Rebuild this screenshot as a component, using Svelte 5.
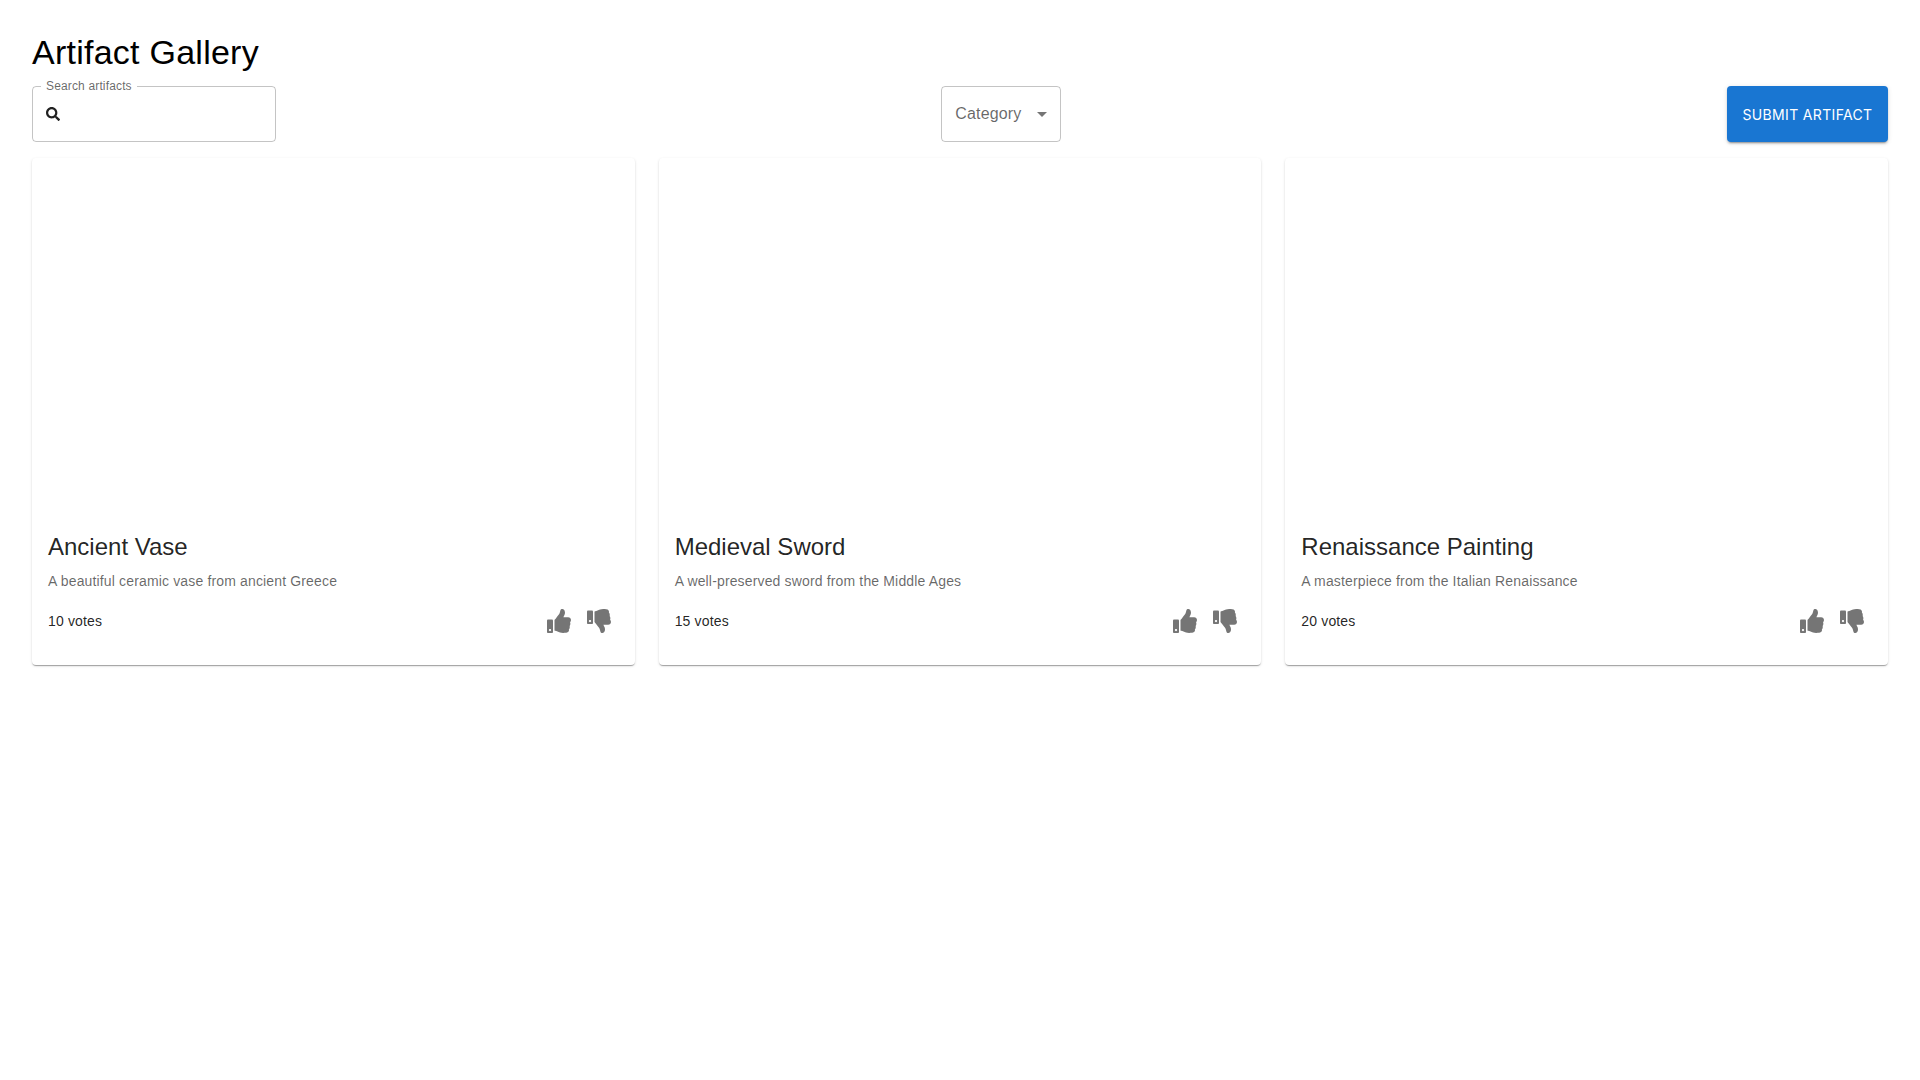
<script lang="ts">
  const artifacts = [
    { title: 'Ancient Vase', text: 'A beautiful ceramic vase from ancient Greece', votes: 10 },
    { title: 'Medieval Sword', text: 'A well-preserved sword from the Middle Ages', votes: 15 },
    { title: 'Renaissance Painting', text: 'A masterpiece from the Italian Renaissance', votes: 20 },
  ];
</script>

<div class="page">
  <h1>Artifact Gallery</h1>

  <div class="toolbar">
    <fieldset class="search">
      <legend>Search artifacts</legend>
      <svg class="search-icon" viewBox="0 0 512 512" fill="currentColor">
        <path d="M505 442.7L405.3 343c-4.5-4.5-10.6-7-17-7H372c27.6-35.3 44-79.7 44-128C416 93.1 322.9 0 208 0S0 93.1 0 208s93.1 208 208 208c48.3 0 92.7-16.4 128-44v16.3c0 6.4 2.5 12.5 7 17l99.7 99.7c9.4 9.4 24.6 9.4 33.9 0l28.3-28.3c9.4-9.4 9.4-24.6.1-34zM208 336c-70.7 0-128-57.2-128-128 0-70.7 57.2-128 128-128 70.7 0 128 57.2 128 128 0 70.7-57.2 128-128 128z" />
      </svg>
    </fieldset>

    <div class="select">
      <span>Category</span>
      <svg class="caret" viewBox="0 0 24 24" fill="currentColor"><path d="M7 10l5 5 5-5z" /></svg>
    </div>

    <button class="submit">Submit Artifact</button>
  </div>

  <div class="grid">
    {#each artifacts as a}
      <div class="card">
        <div class="media"></div>
        <div class="content">
          <h5>{a.title}</h5>
          <p class="desc">{a.text}</p>
          <div class="footer">
            <span class="votes">{a.votes} votes</span>
            <div class="actions">
              <button class="icon-btn" aria-label="Vote up">
                <svg viewBox="0 0 512 512" fill="currentColor">
                  <path d="M104 224H24c-13.255 0-24 10.745-24 24v240c0 13.255 10.745 24 24 24h80c13.255 0 24-10.745 24-24V248c0-13.255-10.745-24-24-24zM64 472c-13.255 0-24-10.745-24-24s10.745-24 24-24 24 10.745 24 24-10.745 24-24 24zM384 81.452c0 42.416-25.97 66.208-33.277 94.548h101.723c33.397 0 59.397 27.746 59.553 58.098.084 17.938-7.546 37.249-19.439 49.197l-.11.11c9.836 23.337 8.237 56.037-9.308 79.469 8.681 25.895-.069 57.704-16.382 74.757 4.298 17.598 2.244 32.575-6.148 44.632C440.202 511.587 389.616 512 346.839 512l-2.845-.001c-48.287-.017-87.806-17.598-119.56-31.725-15.957-7.099-36.821-15.887-52.651-16.178-6.54-.12-11.783-5.457-11.783-11.998v-213.77c0-3.2 1.282-6.271 3.558-8.521 39.614-39.144 56.648-80.587 89.117-113.111 14.804-14.832 20.188-37.236 25.393-58.902C282.515 39.293 291.817 0 312 0c24 0 72 8 72 81.452z" />
                </svg>
              </button>
              <button class="icon-btn" aria-label="Vote down">
                <svg viewBox="0 0 512 512" fill="currentColor">
                  <path d="M0 56v240c0 13.255 10.745 24 24 24h80c13.255 0 24-10.745 24-24V56c0-13.255-10.745-24-24-24H24C10.745 32 0 42.745 0 56zm40 200c0-13.255 10.745-24 24-24s24 10.745 24 24-10.745 24-24 24-24-10.745-24-24zm272 256c-20.183 0-29.485-39.293-33.931-57.795-5.206-21.666-10.589-44.07-25.393-58.902-32.469-32.524-49.503-73.967-89.117-113.111a11.98 11.98 0 0 1-3.558-8.521V59.901c0-6.541 5.243-11.878 11.783-11.998 15.83-.29 36.694-9.079 52.651-16.178C256.189 17.598 295.709.017 343.995 0h2.844c42.777 0 93.363.413 113.774 29.737 8.392 12.057 10.446 27.034 6.148 44.632 16.312 17.053 25.063 48.863 16.382 74.757 17.544 23.432 19.143 56.132 9.308 79.469l.11.11c11.893 11.949 19.523 31.259 19.439 49.197-.156 30.352-26.157 58.098-59.553 58.098H350.723C358.03 364.34 384 388.132 384 430.548 384 504 336 512 312 512z" />
                </svg>
              </button>
            </div>
          </div>
        </div>
      </div>
    {/each}
  </div>
</div>

<style>
  :global(body) { margin: 0; background: #fff; font-family: "Liberation Sans", Arial, sans-serif; }
  .page { padding: 32px; }
  h1 { margin: 0 0 14px; font-size: 34px; font-weight: 400; line-height: 40px; letter-spacing: 0.25px; color: #000; }

  .toolbar { display: flex; justify-content: space-between; align-items: flex-end; margin-bottom: 16px; }

  .search {
    box-sizing: border-box; width: 243.6px; height: 62px; margin: -6px 0 0; padding: 0 13px;
    border: 1px solid rgba(0, 0, 0, 0.23); border-radius: 4px;
    display: flex; align-items: center;
  }
  .search legend { margin-left: -5px; padding: 0 5px; font-size: 12px; line-height: 12px; letter-spacing: 0.15px; color: rgba(0, 0, 0, 0.6); }
  .search-icon { width: 14px; height: 14px; margin-bottom: 5px; color: rgba(0, 0, 0, 0.87); }

  .select {
    box-sizing: border-box; width: 120px; height: 56px; padding: 0 13px;
    border: 1px solid rgba(0, 0, 0, 0.23); border-radius: 4px;
    display: flex; align-items: center; justify-content: space-between;
    font-size: 16px; letter-spacing: 0.15px; color: rgba(0, 0, 0, 0.6);
  }
  .caret { width: 24px; height: 24px; margin-right: -7px; color: rgba(0, 0, 0, 0.54); }

  .submit {
    height: 56px; width: 161px; padding: 0; border: 0; border-radius: 4px;
    background: #1976d2; color: #fff;
    font-family: Inter, sans-serif; font-size: 14px; font-weight: 400; letter-spacing: 0.34px; text-transform: uppercase;
    box-shadow: 0 3px 1px -2px rgba(0,0,0,.2), 0 2px 2px 0 rgba(0,0,0,.14), 0 1px 5px 0 rgba(0,0,0,.12);
  }

  .grid { display: grid; grid-template-columns: repeat(3, 1fr); gap: 24px; }
  .card {
    border-radius: 4px; background: #fff;
    box-shadow: 0 2px 1px -1px rgba(0,0,0,.2), 0 1px 1px 0 rgba(0,0,0,.14), 0 1px 3px 0 rgba(0,0,0,.12);
  }
  .media { height: 357px; }
  .content { padding: 16px 16px 24px; }
  h5 { margin: 0 0 8px; font-size: 24px; font-weight: 400; line-height: 32px; color: rgba(0, 0, 0, 0.87); }
  .desc { margin: 0 0 10px; font-size: 14px; line-height: 20px; letter-spacing: 0.15px; color: rgba(0, 0, 0, 0.6); }
  .footer { display: flex; justify-content: space-between; align-items: center; }
  .votes { font-size: 14px; line-height: 20px; letter-spacing: 0.15px; color: rgba(0, 0, 0, 0.87); }
  .actions { display: flex; }
  .icon-btn { width: 40px; height: 40px; padding: 8px; border: 0; background: none; color: rgba(0, 0, 0, 0.54); }
  .icon-btn svg { display: block; width: 24px; height: 24px; }
</style>
